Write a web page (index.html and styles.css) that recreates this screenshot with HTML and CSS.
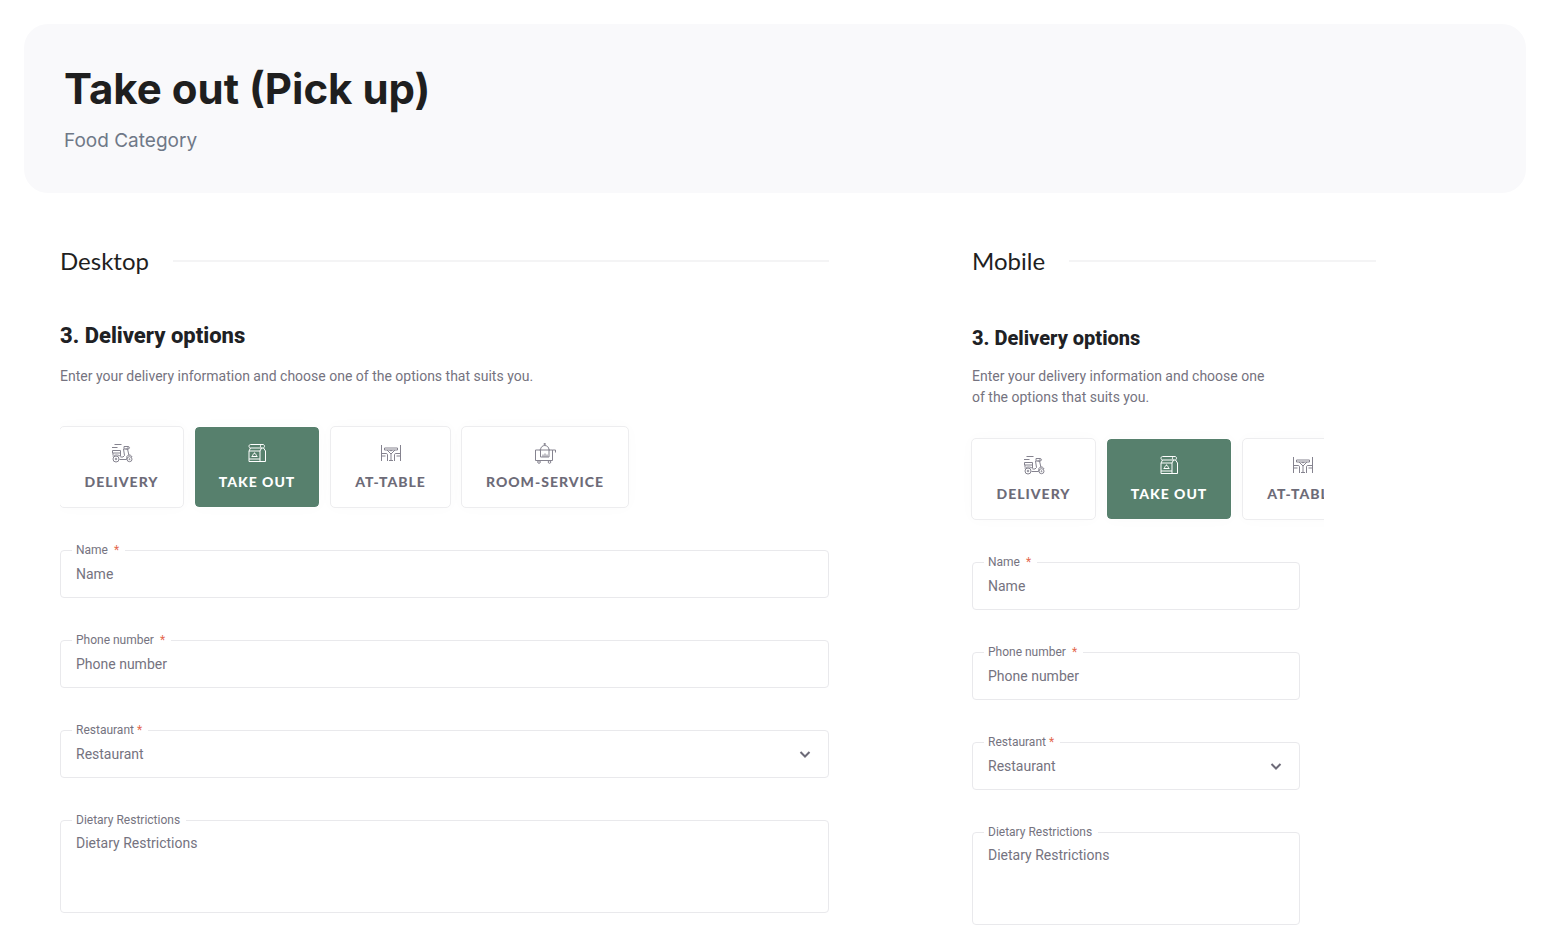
FILE: index.html
```html
<!DOCTYPE html>
<html lang="en">
<head>
<meta charset="utf-8">
<meta name="viewport" content="width=device-width, initial-scale=1">
<title>Take out (Pick up)</title>
<link rel="stylesheet" href="styles.css">
</head>
<body>
<svg class="sprite" aria-hidden="true">
  <symbol id="scooter" viewBox="0 0 22 22">
    <path d="M3.500 2.500h7M1 5.500h5.500M1.500 8.500h8v2.500h-8zM2 11v2.500M9.500 11v3M2 14.500c1-2 6-2 7.500 0M8.500 17.500h7l.5-2M12.500 7l1 6.500-1.500 1.500H9.500M14.500 7h2l1.500 6.500M13 4.500h4v2.500h-4zM17 4.500c2 0 2 2.500 0 2.500M15.500 15.500c.5-3 4.500-3.500 5.500-.5"/>
    <circle cx="5" cy="17" r="3"/><circle cx="5" cy="17" r=".8"/><circle cx="18.500" cy="17.200" r="2.500"/><circle cx="18.500" cy="17.200" r=".5"/>
  </symbol>
  <symbol id="bag" viewBox="0 0 22 22">
    <path d="M4.500 2.500h12.500c2 0 2 3.500 0 3.500H4.500c-2 0-2-3.500 0-3.500zM4.500 6 3 9v10.500h16.500V9L17.500 6M15.500 2.500c-1.500 1-1.500 2.500 0 3.500l-1.500 3v10.500M3 9h11M3 17h11M5.500 14.500h6M6.500 14.500c0-4 4-4 4 0M8.500 11.500v-1"/>
  </symbol>
  <symbol id="table" viewBox="0 0 22 22">
    <path d="M1.500 3v16M20.500 3v16M4.500 6h13v2h-13zM7 8l4 4 4-4M11 12v7M9 18.500h4M1.500 11.500h4.500c1.200 0 1.500.5 1.500 1.500v6M1.500 14h4M20.500 11.500H16c-1.200 0-1.500.5-1.500 1.500v6M20.500 14h-4M9.500 8c0 1 3 1 3 0"/>
  </symbol>
  <symbol id="trolley" viewBox="0 0 22 22">
    <path d="M6.500 8H1.500v10.500h17V8H15M18.500 8h3v2.500M5.500 8h10.500M6.500 8c0-6 8.500-6 8.500 0M10.700 3.500V1M9.500 2h2.500M6.500 8v7h8.500V8M9 15v-2.500M11 15v-3.500M13 15v-2.500"/>
    <circle cx="5" cy="20" r="1.300"/><circle cx="15.500" cy="20" r="1.300"/>
  </symbol>
  <symbol id="chevron" viewBox="0 0 12 12"><path d="M1.500 4 6 8.500 10.500 4"/></symbol>
</svg>

<header class="hero">
  <h1 class="hero-title">Take out (Pick up)</h1>
  <p class="hero-subtitle">Food Category</p>
</header>

<main class="previews">
  <section class="preview">
    <div class="preview-head"><h2 class="preview-title">Desktop</h2><span class="rule"></span></div>
    <h3 class="step-title">3. Delivery options</h3>
    <p class="step-text">Enter your delivery information and choose one of the options that suits you.</p>
    <div class="options">
      <button type="button" class="option"><svg class="icon"><use href="#scooter"/></svg>DELIVERY</button>
      <button type="button" class="option option-active" aria-pressed="true"><svg class="icon"><use href="#bag"/></svg>TAKE OUT</button>
      <button type="button" class="option option-short"><svg class="icon"><use href="#table"/></svg>AT-TABLE</button>
      <button type="button" class="option option-long"><svg class="icon"><use href="#trolley"/></svg>ROOM-SERVICE</button>
    </div>
    <form class="form">
      <div class="field"><label class="label label-wide" for="d-name">Name <span class="required">*</span></label><input class="control" id="d-name" type="text" placeholder="Name"></div>
      <div class="field"><label class="label label-wide" for="d-phone">Phone number <span class="required">*</span></label><input class="control" id="d-phone" type="tel" placeholder="Phone number"></div>
      <div class="field"><label class="label" for="d-restaurant">Restaurant <span class="required">*</span></label><select class="control" id="d-restaurant"><option>Restaurant</option></select><svg class="chevron"><use href="#chevron"/></svg></div>
      <div class="field"><label class="label" for="d-diet">Dietary Restrictions</label><textarea class="control control-area" id="d-diet" placeholder="Dietary Restrictions"></textarea></div>
    </form>
  </section>

  <section class="preview preview-mobile">
    <div class="preview-head"><h2 class="preview-title">Mobile</h2><span class="rule"></span></div>
    <h3 class="step-title">3. Delivery options</h3>
    <p class="step-text">Enter your delivery information and choose one of the options that suits you.</p>
    <div class="options">
      <button type="button" class="option"><svg class="icon"><use href="#scooter"/></svg>DELIVERY</button>
      <button type="button" class="option option-active" aria-pressed="true"><svg class="icon"><use href="#bag"/></svg>TAKE OUT</button>
      <button type="button" class="option option-short"><svg class="icon"><use href="#table"/></svg>AT-TABLE</button>
    </div>
    <form class="form">
      <div class="field"><label class="label label-wide" for="m-name">Name <span class="required">*</span></label><input class="control" id="m-name" type="text" placeholder="Name"></div>
      <div class="field"><label class="label label-wide" for="m-phone">Phone number <span class="required">*</span></label><input class="control" id="m-phone" type="tel" placeholder="Phone number"></div>
      <div class="field"><label class="label" for="m-restaurant">Restaurant <span class="required">*</span></label><select class="control" id="m-restaurant"><option>Restaurant</option></select><svg class="chevron"><use href="#chevron"/></svg></div>
      <div class="field"><label class="label" for="m-diet">Dietary Restrictions</label><textarea class="control control-area" id="m-diet" placeholder="Dietary Restrictions"></textarea></div>
    </form>
  </section>
</main>
</body>
</html>
```
FILE: styles.css
```css
* { box-sizing: border-box; }

body {
  margin: 0;
  padding: 24px 24px 0;
  background: #fff;
  color: #202124;
  font-family: Roboto, "Liberation Sans", sans-serif;
}

h1, h2, h3, p { margin: 0; }

.sprite { position: absolute; width: 0; height: 0; }

.hero {
  padding: 40px;
  border-radius: 24px;
  background: #f9f9fb;
}

.hero-title {
  color: #1f1f1f;
  font: 700 42px/50px Inter, sans-serif;
}

.hero-subtitle {
  margin-top: 14px;
  color: #6f7887;
  font: 400 19px/25px Inter, sans-serif;
}

.previews {
  display: grid;
  grid-template-columns: minmax(0, 769fr) minmax(0, 404fr);
  column-gap: 143px;
  padding: 50px 150px 0 36px;
}

.preview-head {
  display: flex;
  align-items: center;
  gap: 24px;
}

.preview-title {
  color: #1f1f1f;
  font: 400 24px/36px Lato, sans-serif;
}

.rule {
  flex: 1;
  height: 2px;
  background: #f4f4f5;
}

.step-title {
  margin-top: 41px;
  font-size: 22px;
  font-weight: 800;
  line-height: 32px;
}

.step-text {
  margin-top: 14px;
  color: #757380;
  font-size: 14px;
  line-height: 21px;
}

.options {
  display: flex;
  gap: 10px;
  margin: 15px 0 -24px;
  padding: 24px 0;
  overflow: hidden;
}

.option {
  display: flex;
  flex: 0 0 125px;
  flex-direction: column;
  align-items: center;
  gap: 8px;
  padding: 15px 0;
  border: 1px solid #ededef;
  border-radius: 5px;
  background: #fff;
  box-shadow: 0 0 16px rgba(0, 0, 0, 0.02);
  color: #6d6b78;
  font: 900 14px/20px Lato, sans-serif;
  letter-spacing: 1px;
}

.option:first-child { margin-left: -1px; }

.option-active {
  flex-basis: 126px;
  border-color: #fff;
  background: #57806d;
  background-clip: padding-box;
  color: #fff;
}

.option-short { flex-basis: 121px; }
.option-long { flex-basis: 168px; }

.icon {
  width: 22px;
  height: 22px;
  fill: none;
  stroke: #85838f;
  stroke-linejoin: round;
}

.option-active .icon { stroke: #fff; }

.form {
  display: grid;
  gap: 42px;
  margin-top: 42px;
}

.field {
  position: relative;
  display: grid;
}

.label {
  position: absolute;
  top: -8px;
  left: 12px;
  display: flex;
  gap: 3px;
  padding: 0 6px 0 4px;
  background: #fff;
  color: #757380;
  font-size: 12px;
  line-height: 16px;
}

.label-wide { gap: 6px; }

.required { color: #e4694f; }

.control {
  width: 100%;
  height: 48px;
  margin: 0;
  padding: 0 15px;
  border: 1px solid #e9e9ec;
  border-radius: 4px;
  background: #fff;
  color: #757380;
  font: 400 14px/20px Roboto, sans-serif;
  appearance: none;
}

.control::placeholder { color: #757380; opacity: 1; }

.control-area {
  height: 93px;
  padding-top: 12px;
  resize: none;
}

.chevron {
  position: absolute;
  top: 18px;
  right: 18px;
  width: 12px;
  height: 12px;
  fill: none;
  stroke: #6d6b78;
  stroke-width: 2;
  pointer-events: none;
}

.preview-mobile .step-title {
  margin-top: 45px;
  font-size: 20px;
  line-height: 28px;
}

.preview-mobile .step-text { max-width: 300px; }

.preview-mobile .options {
  max-width: 368px;
  margin-top: 6px;
  margin-left: -16px;
  padding-left: 16px;
}

.preview-mobile .form { max-width: 328px; }
```
